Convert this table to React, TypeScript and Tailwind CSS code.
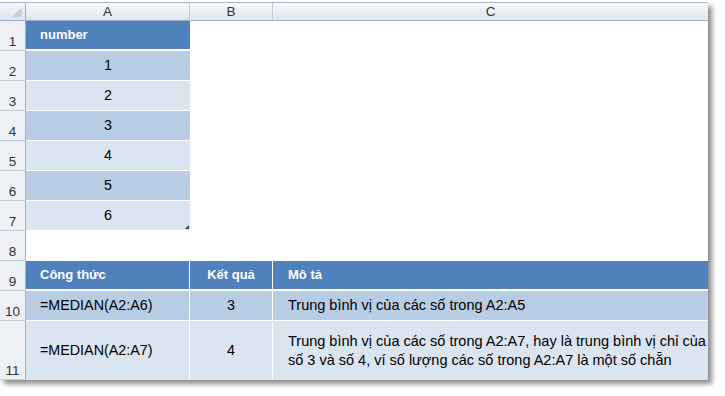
import React from "react";

const rowHeads = ["1", "2", "3", "4", "5", "6", "7", "8", "9", "10", "11"];

function RowHead({ label }: { label: string }) {
  return (
    <div className="flex items-end justify-center bg-[#edf1f6] border-b border-r border-b-[#c3cedb] border-r-[#9eb0c4] text-[13.5px] leading-[16px] text-[#333]">
      {label}
    </div>
  );
}

function ColHead({ label, last }: { label: string; last?: boolean }) {
  return (
    <div
      className={
        "flex items-center justify-center bg-gradient-to-b from-[#f9fafc] to-[#dde5ee] border-b border-b-[#9eb0c4] text-[13.5px] leading-none text-[#333] " +
        (last ? "" : "border-r border-r-[#c3cedb]")
      }
    >
      {label}
    </div>
  );
}

export default function App() {
  const nums = ["1", "2", "3", "4", "5", "6"];

  return (
    <div className="w-[725px] h-[396px] bg-white font-['Liberation_Sans',Arial,sans-serif]">
      <div className="pt-[2px]">
        <div className="w-[708px] border-t border-t-[#a7b7c9] shadow-[4px_4px_5px_rgba(0,0,0,0.45)] bg-white">
          <div className="grid grid-cols-[26px_164px_83px_435px] grid-rows-[18px_repeat(10,30px)_59px]">
            {/* header row */}
            <div className="relative bg-gradient-to-b from-[#f4f6f9] to-[#dde5ee] border-b border-r border-b-[#9eb0c4] border-r-[#9eb0c4]">
              <div className="absolute right-[3px] bottom-[3px] w-0 h-0 border-l-[10px] border-l-transparent border-b-[10px] border-b-[#c6d1dd]" />
            </div>
            <ColHead label="A" />
            <ColHead label="B" />
            <ColHead label="C" last />

            {/* row 1 */}
            <RowHead label={rowHeads[0]} />
            <div className="flex items-center pl-[14px] bg-[#4f81bd] border-b-2 border-white text-white font-bold text-[13px]">
              number
            </div>
            <div />
            <div />

            {/* rows 2-7 */}
            {nums.map((n, i) => (
              <React.Fragment key={n}>
                <RowHead label={rowHeads[i + 1]} />
                <div
                  className={
                    "relative flex items-center justify-center border-b border-white text-[14.3px] text-black " +
                    (i % 2 === 0 ? "bg-[#b8cce4]" : "bg-[#dbe5f1]")
                  }
                >
                  {n}
                  {i === 5 && (
                    <svg className="absolute right-[1px] bottom-[1px]" width="4" height="4" viewBox="0 0 4 4">
                      <path d="M4 0 L4 4 L0 4 Z" fill="#1f3f7a" />
                    </svg>
                  )}
                </div>
                <div />
                <div />
              </React.Fragment>
            ))}

            {/* row 8 */}
            <RowHead label={rowHeads[7]} />
            <div />
            <div />
            <div />

            {/* row 9 */}
            <RowHead label={rowHeads[8]} />
            <div className="flex items-center pl-[14px] bg-[#4f81bd] border-b-2 border-r border-white text-white font-bold text-[13px]">
              Công thức
            </div>
            <div className="flex items-center justify-center bg-[#4f81bd] border-b-2 border-r border-white text-white font-bold text-[13px]">
              Kết quả
            </div>
            <div className="flex items-center pl-[15px] bg-[#4f81bd] border-b-2 border-white text-white font-bold text-[13px]">
              Mô tả
            </div>

            {/* row 10 */}
            <RowHead label={rowHeads[9]} />
            <div className="flex items-center pl-[14px] bg-[#b8cce4] border-b border-r border-white text-[14.3px]">
              =MEDIAN(A2:A6)
            </div>
            <div className="flex items-center justify-center bg-[#b8cce4] border-b border-r border-white text-[14.3px]">
              3
            </div>
            <div className="flex items-center pl-[15px] bg-[#b8cce4] border-b border-white text-[14.5px]">
              Trung bình vị của các số trong A2:A5
            </div>

            {/* row 11 */}
            <RowHead label={rowHeads[10]} />
            <div className="flex items-center pl-[14px] bg-[#dbe5f1] border-r border-white text-[14.3px]">
              =MEDIAN(A2:A7)
            </div>
            <div className="flex items-center justify-center bg-[#dbe5f1] border-r border-white text-[14.3px]">
              4
            </div>
            <div className="flex items-center pl-[15px] bg-[#dbe5f1] text-[14.5px] leading-[19px] whitespace-nowrap">
              <p>
                Trung bình vị của các số trong A2:A7, hay là trung bình vị chỉ của
                <br />
                số 3 và số 4, ví số lượng các số trong A2:A7 là một số chẵn
              </p>
            </div>
          </div>
        </div>
      </div>
    </div>
  );
}
